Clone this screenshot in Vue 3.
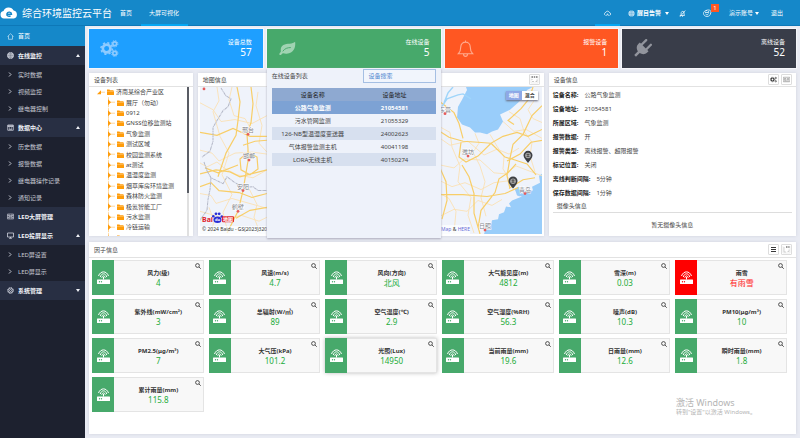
<script setup>
import { ref } from 'vue'

const menu = [
  { name: '在线监控', icon: 'globe', arrow: 'up', children: ['实时数据', '视频监控', '继电器控制'] },
  { name: '数据中心', icon: 'calendar', arrow: 'up', children: ['历史数据', '报警数据', '继电器操作记录', '通知记录'] },
  { name: 'LED大屏管理', icon: 'panel', arrow: '', children: [] },
  { name: 'LED投屏显示', icon: 'screen', arrow: 'up', children: ['LED屏设置', 'LED屏显示'] },
  { name: '系统管理', icon: 'gear', arrow: 'down', children: [] },
]

const stats = [
  { name: '设备总数', value: 57, tone: 'blue', icon: 'gears' },
  { name: '在线设备', value: 5, tone: 'green', icon: 'leaf' },
  { name: '报警设备', value: 1, tone: 'orange', icon: 'bell' },
  { name: '离线设备', value: 52, tone: 'dark', icon: 'plug' },
]

const online = [
  ['公路气象监测', '21054581'],
  ['污水管网监测', '21055329'],
  ['126-NB型温湿度变送器', '24002623'],
  ['气体报警监测主机', '40041198'],
  ['LORA无线主机', '40150274'],
]

const tree = [
  '济南某综合产业区', '展厅（勿动）', '0912', 'GNSS位移监测站', '气象监测', '测试区域', '校园监测系统',
  'at测试', '温湿度监测', '烟草库房环境监测', '森林防火监测', '极氪智能工厂', '污水监测', '冷链运输', '',
]

const info = [
  ['设备名称', '公路气象监测'],
  ['设备地址', '21054581'],
  ['所属区域', '气象监测'],
  ['报警数据', '开'],
  ['报警类型', '离线报警、超限报警'],
  ['标记位置', '关闭'],
  ['离线判断间隔', '5分钟'],
  ['保存数据间隔', '1分钟'],
]

const factors = [
  ['风力(级)', '4'], ['风速(m/s)', '4.7'], ['风向(方向)', '北风'], ['大气能见度(m)', '4812'], ['雪深(m)', '0.03'], ['雨雪', '有雨雪', true],
  ['紫外线(mW/cm²)', '3'], ['总辐射(W/㎡)', '89'], ['空气温度(℃)', '2.9'], ['空气湿度(%RH)', '56.3'], ['噪声(dB)', '10.3'], ['PM10(μg/m³)', '10'],
  ['PM2.5(μg/m³)', '7'], ['大气压(kPa)', '101.2'], ['光照(Lux)', '14950'], ['当前雨量(mm)', '19.6'], ['日雨量(mm)', '12.6'], ['瞬时雨量(mm)', '1.8'],
  ['累计雨量(mm)', '115.8'],
]
const hovered = 14

const cities = [
  { name: '邢台', x: 248, y: 135 }, { name: '邯郸', x: 249, y: 161 },
  { name: '安阳', x: 243, y: 192 }, { name: '鹤壁', x: 238, y: 213 },
  { name: '东营', x: 445, y: 114 }, { name: '潍坊', x: 468, y: 157 },
  { name: '青岛', x: 525, y: 195 }, { name: '日照', x: 485, y: 232 },
]
const pins = [[528, 164], [513, 190]]
const keyword = ref('')
</script>

<template>
  <div class="app">
    <header class="top">
      <a class="brand" href="#">
        <svg class="cloud" viewBox="0 0 18 12">
          <path fill="#fff" d="M4 11.500A3.800 3.800 0 0 1 3.500 4 5.500 5.500 0 0 1 13.600 3.500 4.100 4.100 0 0 1 13.800 11.500Z" />
          <path fill="none" stroke="#1588c9" stroke-width="1.400" d="M6.300 7.200H11.500C11.500 4.700 7.700 4.300 6.900 6.700 6.300 9 8.600 9.800 10.600 8.800" />
        </svg>
        <h1>综合环境监控云平台</h1>
      </a>
      <nav class="tabs">
        <a href="#">首页</a>
        <a href="#" class="on">大屏可视化</a>
      </nav>
      <nav class="tools">
        <a href="#" class="on" aria-label="theme">
          <svg class="i7" viewBox="0 0 14 14" fill="none" stroke="#fff" stroke-width="1.500"><path d="M3 11C-.5 9 1 5 3.500 4.800 4.500 1.500 9.500 1.500 10.500 4.800 14 5.500 14 10 11 11M5 11.500 7 7.500 9 11.500" /></svg>
        </a>
        <a href="#" class="bold globe">
          <svg class="i7" viewBox="0 0 14 14"><circle cx="7" cy="7" r="6" fill="#e8f4fc" /><path fill="none" stroke="#1588c9" stroke-width=".6" d="M1 7H13M7 1V13M2 4H12M2 10H12M7 1C3 4 3 10 7 13M7 1C11 4 11 10 7 13" /></svg>
          醒目告警<i class="caret" />
        </a>
        <a href="#" class="mute" aria-label="mute">
          <svg class="i7" viewBox="0 0 14 14" fill="none" stroke="#fff" stroke-width="1.500"><path d="M2 11H11L10 8V5C10 2 5 2 4.500 5L4 9ZM6 12.500H8M12.500 1 2 13.500" /></svg>
        </a>
        <a href="#" class="msg" aria-label="messages">
          <svg class="i9" viewBox="0 0 18 18" fill="none" stroke="#fff" stroke-width="1.500"><path d="M8 3C3 3 1 6 1 9S4 15 8 15 15 12 15 9M5 4C8 1 16 1 16 6 16 8 15 9 14 10M4 7H10M5 10C7 12 10 12 11 9" /><circle cx="11" cy="6" r="1" /></svg>
          <b class="badge">1</b>
        </a>
        <a href="#" class="user">演示账号<i class="caret" /></a>
        <a href="#">退出</a>
      </nav>
    </header>

    <div class="body">
      <aside class="side">
        <a href="#" class="home">
          <svg class="i7" viewBox="0 0 14 14" fill="none" stroke="#e6f4fc" stroke-width="1.200"><path d="M1 7 7 1.500 13 7M3 6V12.500H11V6" /></svg>首页
        </a>
        <template v-for="m in menu" :key="m.name">
          <a href="#" class="group">
            <svg class="i7" viewBox="0 0 14 14" fill="none" stroke="#e4e7f0" stroke-width="1.400">
              <template v-if="m.icon === 'globe'"><circle cx="7" cy="7" r="6" fill="#e4e7f0" /><path stroke="#282f43" stroke-width=".6" d="M1 7H13M7 1V13M2 4H12M2 10H12M7 1C3 4 3 10 7 13M7 1C11 4 11 10 7 13" /></template>
              <path v-else-if="m.icon === 'calendar'" d="M1.500 2H12.500V12.500H1.500ZM1.500 3.500H12.500M1.500 5H12.500M4 8H6M8 8H10M4 10.500H10" />
              <path v-else-if="m.icon === 'panel'" d="M1 2H13V12H1ZM4 2V12M10 2V12M4 5H10M4 7H10M4 9.500H10M1 5H4M1 9H4M10 5H13M10 9H13" stroke-width="1" />
              <path v-else-if="m.icon === 'screen'" d="M1 2H13V10H1ZM4 12.500H10M7 10V12.500" />
              <template v-else><circle cx="7" cy="7" r="2" /><circle cx="7" cy="7" r="4.800" /><circle cx="7" cy="7" r="6" stroke-dasharray="2.400 2.300" /></template>
            </svg>
            <span>{{ m.name }}</span>
            <i v-if="m.arrow" class="caret" :class="m.arrow" />
          </a>
          <div v-if="m.children.length" class="subs">
            <a v-for="c in m.children" :key="c" href="#">
              <svg class="chev" viewBox="0 0 8 10" fill="none" stroke="#d4d7e0" stroke-width="1.800"><path d="M2 1 6 5 2 9" /></svg>{{ c }}
            </a>
          </div>
        </template>
      </aside>

      <main class="main">
        <section class="stats">
          <article v-for="s in stats" :key="s.name" class="stat" :class="s.tone">
            <svg class="big" viewBox="0 0 20 20">
              <g v-if="s.icon === 'gears'" fill="none" stroke="#8fcbff">
                <circle cx="7" cy="10" r="4" stroke-width="2.800" /><circle cx="7" cy="10" r="6" stroke-width="1.600" stroke-dasharray="2.300 2.400" />
                <circle cx="15.500" cy="5" r="2" stroke-width="1.700" /><circle cx="15.500" cy="5" r="3.300" stroke-width="1" stroke-dasharray="1.500 1.100" />
                <circle cx="15.500" cy="15" r="2" stroke-width="1.700" /><circle cx="15.500" cy="15" r="3.300" stroke-width="1" stroke-dasharray="1.500 1.100" />
              </g>
              <g v-else-if="s.icon === 'leaf'"><path fill="#a0d3b2" d="M18 3C19 9 16 16 8.500 15.500 6 15 4.800 14.500 3.800 16 3 17.500 1 17 1.500 15.500 1.800 14.500 3 14 3 13 2 6 8 5 12 5 15 5 16.500 4 18 3Z" /><path fill="none" stroke="#47a96b" stroke-width="1" d="M5 13C7 10 10 9 13.500 9" /></g>
              <path v-else-if="s.icon === 'bell'" fill="none" stroke="#ffab8f" stroke-width="1.200" d="M2.500 15.500C5 13 5 11 5 8.500 5 1.500 15 1.500 15 8.500 15 11 15 13 17.500 15.500ZM8 16C8 19 12 19 12 16M10 3V1.500" />
              <g v-else transform="rotate(45 10 10)"><path fill="#92959d" d="M3.500 7.500H16.500V9.500C16.500 13 14 15 11.300 15.500V21H8.700V15.500C6 15 3.500 13 3.500 9.500Z" /><path stroke="#92959d" stroke-width="2.400" stroke-linecap="round" d="M6.500 1V8M13.500 1V8" /></g>
            </svg>
            <div class="figure"><span>{{ s.name }}</span><strong>{{ s.value }}</strong></div>

            <div v-if="s.tone === 'green'" class="popup">
              <div class="finder">
                <label for="find">在线设备列表</label>
                <input id="find" v-model="keyword" type="text" placeholder="设备搜索">
              </div>
              <table>
                <thead><tr><th>设备名称</th><th>设备地址</th></tr></thead>
                <tbody><tr v-for="r in online" :key="r[1]"><td>{{ r[0] }}</td><td>{{ r[1] }}</td></tr></tbody>
              </table>
            </div>
          </article>
        </section>

        <section class="middle">
          <article class="panel">
            <header><h2>设备列表</h2></header>
            <div class="treebox">
              <ul>
                <li v-for="(t, n) in tree" :key="n" :class="{ root: n === 0 }">
                  <svg class="tick" viewBox="0 0 8 10"><path v-if="n" stroke="#ffd699" d="M1.500 0V10" /><path stroke="#ffd699" d="M3 5H8" /><path fill="#ff9c0a" :d="n ? 'M1 2 4 5 1 8Z' : 'M4 3V7H0Z'" /></svg>
                  <svg class="folder" viewBox="0 0 14 12"><path fill="#ff9c0a" d="M0 1H5L6 2.500H13V4H0ZM0 4.500H14V12H0Z" /></svg>
                  {{ t }}
                </li>
              </ul>
              <div class="track"><div class="thumb" /></div>
            </div>
          </article>

          <article class="panel">
            <header>
              <h2>地图信息</h2>
              <button type="button" aria-label="expand"><svg class="i9" viewBox="0 0 18 18" fill="none"><path stroke="#ddd" d="M2 2V16H16V2" /><path stroke="#333" stroke-width="2" stroke-dasharray="3 1.500" d="M3 4H15" /><path stroke="#999" d="M4 8V10M4 13H8M11 13H14V9" /></svg></button>
            </header>
            <div class="map">
              <svg viewBox="200 87 342 149" preserveAspectRatio="none">
                <rect x="200" y="87" width="342" height="149" fill="#eff3fb" />
                <g fill="#99cdfa">
                  <path d="M466 87 467 90 462 100 458 107 457 118 462 125 470 128 475 133 480 133 487 135 492 132 498 130 503 122 500 115 510 110 518 103 523 98 527 90 533 87Z" />
                  <path d="M542 175 539 177 540 184 532 188 533 192 521 193 518 189 515 191 517 197 522 198 512 202 509 205 511 209 506 208 504 214 499 216 498 221 492 222 491 227 486 230 484 236H542Z" />
                  <path d="M515 191 518 188 522 190 524 195 519 198Z" />
                </g>
                <g fill="none" stroke="#fbe1b4" stroke-width=".9">
                  <path d="M200 103 213 110 221 122 235 120 252 124 267 116M217 87 219 101 213 112 220 137 229 154 222 176 232 196 223 214 228 235M200 151 212 154 219 162 235 154 252 153 267 155M232 87 229 100 234 116 245 119 250 128M258 92 256 106 262 126 259 144 267 153M200 164 207 168 217 163 224 169 237 176 253 179 267 171M200 195 211 197 216 205 232 200 246 204 267 210M249 190 257 206 254 219 260 235M200 213 214 217 227 221 241 217 259 223 267 219M211 235 214 223 209 209" />
                  <path d="M441 128 450 133 452 148 460 167 458 183 471 199 468 217 474 235M440 166 454 169 464 160 480 161 494 174 505 175 516 167 542 177M440 182 452 188 465 184 481 191 494 184 509 182M440 218 454 211 467 213 478 202 492 207 502 201M475 134 479 144 473 153 480 167 485 183 481 199 486 218M490 135 497 147 504 158 503 170 510 182M503 122 514 132 526 130 542 139M509 112 520 119 524 132 532 143 530 157 535 173M519 149 509 155 497 150 484 156 468 142 450 146 440 139M534 101 528 110 533 119 542 123M440 195 449 200 456 213 454 235" />
                </g>
                <g fill="none" stroke="#f8ce68" stroke-width="1.200">
                  <path d="M237 87 240 102 238 121 236 136 226 154 218 178M251 87 253 104 251 123 247 135 248 150 248 162 243 192 238 213 227 235M200 133 217 136 233 129 250 137 267 137M243 146 255 142 267 141M240 160 248 153 257 158 258 170 250 176 241 171Z M200 175 216 171 230 173 240 178 251 175 267 171M200 188 211 184 219 192 239 194 252 199 267 195M236 220 250 212 267 209M238 166 218 174 205 169" />
                  <path d="M440 132 449 138 463 142 478 143 491 144 503 137 517 133 528 137 542 130M491 144 505 158 515 161 527 165 536 176M491 144 478 157 466 163 459 158 461 143M440 169 446 183 447 202 442 221M440 196 463 196 487 198 505 195 518 189M462 166 469 178 474 195 474 215 480 236M440 102 454 113 459 124 463 139M542 106 532 116 523 135 513 145 510 159 507 177 510 190M516 165 508 174 499 180 495 194 481 212 478 230M533 87 529 99 521 109 508 121 514 125M507 162 520 155 531 143 542 141M509 190 523 181 535 179" />
                </g>
                <path fill="none" stroke="#9fd5fa" stroke-width="1.400" d="M440 110 447 99 458 95 463 94 471 99M444 103 448 93 453 87" />
                <path fill="none" stroke="#b4b8c7" stroke-width="1" stroke-dasharray="3 .5 1 .5" d="M221 88 226 96 231 99 228 107 223 111 217 121 213 128 213 142 210 152 202 158M204 163 207 172 211 179 223 185 227 178 235 184 243 189 253 188 258 192 267 192M211 179 210 191 208 201 207 212 200 222" />
                <g font-size="6" fill="#7e828b" text-anchor="middle">
                  <g v-for="c in cities" :key="c.name"><text :x="c.x" :y="c.y - 2" stroke="#fff" stroke-width="1" paint-order="stroke">{{ c.name }}</text><circle :cx="c.x" :cy="c.y" r="1.400" fill="#e65b5b" /></g>
                  <circle cx="204" cy="89" r="1.400" fill="#e65b5b" />
                </g>
                <g v-for="p in pins" :key="p[0]" :transform="`translate(${p[0]} ${p[1]})`">
                  <path fill="#3d3f43" d="M0 0C-2 -3 -4.500 -5 -4.500 -7.800A4.500 4.500 0 0 1 4.500 -7.800C4.500 -5 2 -3 0 0Z" /><circle cy="-7.500" r="2.800" fill="#aaa" /><path stroke="#444" stroke-width=".8" fill="none" d="M-1.500 -8.500H1.500M0 -9.500V-6M-1.500 -6.500H1.500" />
                </g>
                <rect x="200" y="228" width="68" height="8" fill="#fff" fill-opacity=".7" />
                <rect x="440" y="227" width="30" height="9" fill="#fff" fill-opacity=".7" />
                <text x="202" y="224" font-size="7" font-weight="700" fill="#e1202a">Bai</text>
                <g fill="#2b2fd6"><ellipse cx="217.500" cy="221.500" rx="4" ry="3.300" /><circle cx="213.300" cy="218" r="1.300" /><circle cx="216" cy="215.600" r="1.400" /><circle cx="219.200" cy="215.600" r="1.400" /><circle cx="221.800" cy="218.200" r="1.300" /></g>
                <text x="215" y="223" font-size="4" font-weight="700" fill="#fff">du</text>
                <rect x="222" y="218" width="12" height="6" rx="1" fill="#e1202a" /><text x="223" y="223" font-size="5" font-weight="700" fill="#fff">地图</text>
                <text x="202" y="233" font-size="5" fill="#333">© 2024 Baidu - GS(2023)320</text>
                <text x="441" y="233" font-size="5" fill="#6b6bd8">Map <tspan fill="#333">&amp;</tspan> HERE</text>
              </svg>
              <div class="mode"><button type="button" class="on">地图</button><button type="button">混合</button></div>
            </div>
          </article>

          <article class="panel">
            <header>
              <h2>设备信息</h2>
              <button type="button" aria-label="settings"><svg class="i7" viewBox="0 0 14 14" fill="none" stroke="#333"><circle cx="5" cy="7" r="3" stroke-width="2.200" /><circle cx="5" cy="7" r="4.600" stroke-width="1" stroke-dasharray="1.600 1.200" /><circle cx="11.500" cy="4" r="1.400" stroke-width="1.300" /><circle cx="11.500" cy="10.500" r="1.400" stroke-width="1.300" /></svg></button>
              <button type="button" aria-label="card"><svg class="i7" viewBox="0 0 14 14" fill="none" stroke="#777"><path d="M.5 2.500H13.500V11.500H.5ZM2.500 5H6V8H2.500ZM8 5H12M8 7H12M2.500 9.800H12" /></svg></button>
            </header>
            <div class="info">
              <dl><div v-for="r in info" :key="r[0]"><dt>{{ r[0] }}:</dt><dd>{{ r[1] }}</dd></div></dl>
              <h3>摄像头信息</h3>
              <p>暂无摄像头信息</p>
            </div>
          </article>
        </section>

        <section class="panel factors">
          <header>
            <h2>因子信息</h2>
            <button type="button" aria-label="list"><svg class="i7" viewBox="0 0 14 14" stroke="#222" stroke-width="1.800"><path d="M2 3H12M2 7H12M2 11H12" /></svg></button>
            <button type="button" aria-label="expand"><svg class="i9" viewBox="0 0 18 18" fill="none"><path stroke="#ddd" d="M2 2V16H16V2" /><path stroke="#333" stroke-width="2" stroke-dasharray="3 1.500" d="M8 4H15" /><path stroke="#aaa" d="M4 4V14H8M11 13H14V9" /></svg></button>
          </header>
          <div class="grid">
            <article v-for="(f, n) in factors" :key="f[0]" class="factor" :class="{ alarm: f[2], hover: n === hovered }">
              <div class="tile">
                <svg class="router" viewBox="0 0 26 26"><rect y="17" x="0" width="26" height="9" rx="1" fill="#fff" /><path stroke="#fff" stroke-width="2" d="M13 12V17" /><g fill="none" stroke="#fff" stroke-width="2"><path d="M3 10C7 -1 19 -1 23 10" /><path d="M6.500 12C9 3.500 17 3.500 19.500 12" /><path d="M9.500 13.500C11 8.500 15 8.500 16.500 13.500" /></g><g class="led"><circle cx="5" cy="21.500" r="1.300" /><circle cx="9" cy="21.500" r="1.300" /></g></svg>
              </div>
              <div class="reading"><h4>{{ f[0] }}</h4><b>{{ f[1] }}</b></div>
              <button type="button" class="look" aria-label="details"><svg viewBox="0 0 12 12" fill="none" stroke="#222" stroke-width="1.500"><circle cx="5" cy="5" r="3.800" /><path d="M8 8 11.500 11.500" /></svg></button>
            </article>
          </div>
          <div class="notice"><strong>激活 Windows</strong><span>转到"设置"以激活 Windows。</span></div>
        </section>
      </main>
    </div>
  </div>
</template>

<style>
body { margin: 0; background: #e9ebf3; }
</style>

<style scoped>
* { box-sizing: border-box; }
.app { font: 6px/8px "Noto Sans", "Noto Sans CJK SC", sans-serif; color: #444; min-height: 100vh; display: flex; flex-direction: column; }
h1, h2, h3, h4, p, ul, dl, dd { margin: 0; padding: 0; font-size: inherit; font-weight: 400; list-style: none; }
a { color: inherit; text-decoration: none; }
button { font: inherit; color: inherit; padding: 0; margin: 0; border: 0; background: none; }
svg { display: block; flex: none; }
.i7 { width: 7px; height: 7px; }
.i9 { width: 9px; height: 9px; }
.caret { display: inline-block; border: 2px solid transparent; border-top: 3px solid currentColor; border-bottom: 0; }
.caret.up { border-top: 0; border-bottom: 3px solid currentColor; }

.top { display: flex; height: 26px; background: #1588c9; border-bottom: 1px solid #0d78b8; color: #fff; }
.brand { display: flex; align-items: center; gap: 4px; width: 113px; white-space: nowrap; }
.cloud { width: 18px; height: 12px; }
.brand h1 { font-size: 10px; line-height: 26px; }
.tabs, .tools { display: flex; }
.tabs a, .tools a { display: flex; align-items: center; padding: 2px 7px 0; border-bottom: 2px solid transparent; height: 26px; white-space: nowrap; }
.tabs a { margin-right: 2px; }
.tabs .on, .tools .on { border-bottom-color: #05a6f2; }
.tabs a + a { padding-left: 8px; padding-right: 9px; }
.tools { margin-left: auto; padding-right: 10px; }
.tools .on { padding: 2px 9px 0; }
.tools .globe { gap: 2px; padding: 2px 2px 0 8px; }
.tools .mute { padding: 2px 8px 0; }
.tools .msg { position: relative; padding: 2px 10px 0 9px; }
.globe .caret, .user .caret { margin-left: 2px; }
.tools .user { padding: 2px 5px 0 7px; }
.bold { font-weight: 700; }
.badge { position: absolute; left: 17px; top: 4px; width: 8px; height: 8px; background: #ff5722; text-align: center; font-weight: 400; }

.body { display: flex; flex: 1; }
.side { width: 85px; flex: none; background: #1d212f; color: #c6c9d2; }
.side a { display: flex; align-items: center; white-space: nowrap; }
.side .home { height: 20px; padding: 0 7px; gap: 4px; background: #1588c9; color: #fff; }
.side .group { height: 19px; padding: 0 5px 0 7px; gap: 4px; background: #282f43; color: #f0f2f7; font-weight: 700; }
.group .caret { margin-left: auto; }
.subs { padding: 1px 0; }
.subs a { height: 17px; padding: 0 8px; gap: 6px; }
.chev { width: 4px; height: 5px; }

.main { flex: 1; min-width: 0; display: flex; flex-direction: column; gap: 5px; padding: 3px 4px 5px; }
.stats { display: grid; grid-template-columns: repeat(4, 1fr); gap: 4px; }
.stat { position: relative; display: flex; align-items: center; justify-content: space-between; height: 39px; padding: 0 11px; color: #fff; box-shadow: 0 0 1px 1px #f5f6fa; }
.blue { background: #1e9fff; }
.green { background: #47a96b; }
.orange { background: #ff5722; }
.dark { background: #393d49; }
.big { width: 19px; height: 19px; }
.figure { display: flex; flex-direction: column; padding-bottom: 2px; text-align: right; }
.figure strong { font-size: 10px; line-height: 12px; font-weight: 400; }
.popup { position: absolute; z-index: 2; top: 39px; left: 0; width: 100%; height: 170px; padding: 1px 5px; background: #eef2fa; color: #444; box-shadow: 0 1px 2px #aab; }
.finder { display: flex; align-items: center; justify-content: space-between; }
.finder input { width: 44%; height: 14px; padding: 0 4px; font: inherit; color: #4f86cf; border: 1px solid #a5bfe3; background: #f1f5fc; outline: 0; }
.finder input::placeholder { color: #4f86cf; opacity: 1; }
.popup table { width: 100%; margin-top: 5px; border-collapse: collapse; table-layout: fixed; text-align: center; }
.popup th, .popup td { height: 13px; padding: 0; }
.popup th { background: #8ea9d1; color: #222; font-weight: 400; }
.popup tbody tr:nth-child(odd) { background: #d7e0ef; }
.popup tbody tr:first-child { background: #7da2d4; color: #fff; font-weight: 700; }

.panel { display: flex; flex-direction: column; min-width: 0; background: #fff; box-shadow: 0 0 3px #cfd2dd; }
.panel > header { display: flex; align-items: center; gap: 2px; height: 14px; padding: 0 4px 0 5px; border-bottom: 1px solid #e2e2e2; }
.panel > header h2 { margin-right: auto; }
.panel > header button { display: grid; place-items: center; width: 11px; height: 11px; border: 1px solid #ddd; border-radius: 1px; }
.middle { display: grid; grid-template-columns: 104fr 347fr 248fr; gap: 5px; }
.treebox { flex: 1; contain: size; display: flex; overflow: hidden; padding-right: 4px; }
.treebox ul { flex: 1; display: flex; flex-direction: column; height: calc(100% + 7px); }
.treebox li { flex: 1; display: flex; align-items: center; gap: 2px; padding-left: 18px; white-space: nowrap; }
.treebox .root { padding-left: 8px; }
.tick { width: 8px; height: 100%; }
.folder { width: 7px; height: 6px; }
.track { width: 2px; background: #e0e0e0; }
.thumb { height: 71%; background: #595c64; }
.map { position: relative; flex: 1; contain: size; margin: 0 2px 2px; overflow: hidden; }
.map > svg { width: 100%; height: 100%; }
.mode { position: absolute; right: 4px; top: 4px; display: flex; background: #fff; box-shadow: 0 1px 2px #667; }
.mode button { width: 16px; height: 9px; line-height: 9px; font-size: 5px; font-weight: 700; }
.mode .on { background: #8ea8e6; color: #fff; }
.info { padding: 1px 4px 7px; }
.info dl div { display: flex; gap: 6px; height: 14px; line-height: 14px; }
.info dt { color: #222; font-weight: 700; }
.info h3 { height: 13px; padding-left: 4px; line-height: 12px; border-bottom: 1px solid #ddd; }
.info p { padding-top: 8px; text-align: center; }

.factors { flex: 1; margin-top: 1px; position: relative; }
.factors > header { height: 16px; }
.grid { display: grid; grid-template-columns: repeat(6, 1fr); gap: 4px 5px; padding: 2px 9px 22px 3px; }
.factor { position: relative; display: flex; height: 35px; background: #f8f8f8; border: 1px solid #e4e4e4; border-left: 0; }
.hover { box-shadow: 0 0 4px #bbb; }
.tile { display: grid; place-items: center; width: 22px; margin: -1px 0; background: #47a96b; }
.router { width: 13px; height: 13px; }
.led { fill: #47a96b; }
.reading { flex: 1; text-align: center; padding-top: 8px; white-space: nowrap; }
.reading h4 { color: #333; font-weight: 700; }
.reading b { display: block; font-size: 8px; line-height: 12px; font-weight: 400; color: #22ac38; }
.alarm .tile { background: #f00; }
.alarm .led { fill: #f00; }
.alarm .reading b { color: #f22; }
.look { position: absolute; top: 2px; right: 2px; }
.look svg { width: 6px; height: 6px; }
.notice { position: absolute; right: 40px; bottom: 18px; display: flex; flex-direction: column; color: #b4b4b4; }
.notice strong { font-size: 9px; line-height: 11px; font-weight: 400; }
</style>
